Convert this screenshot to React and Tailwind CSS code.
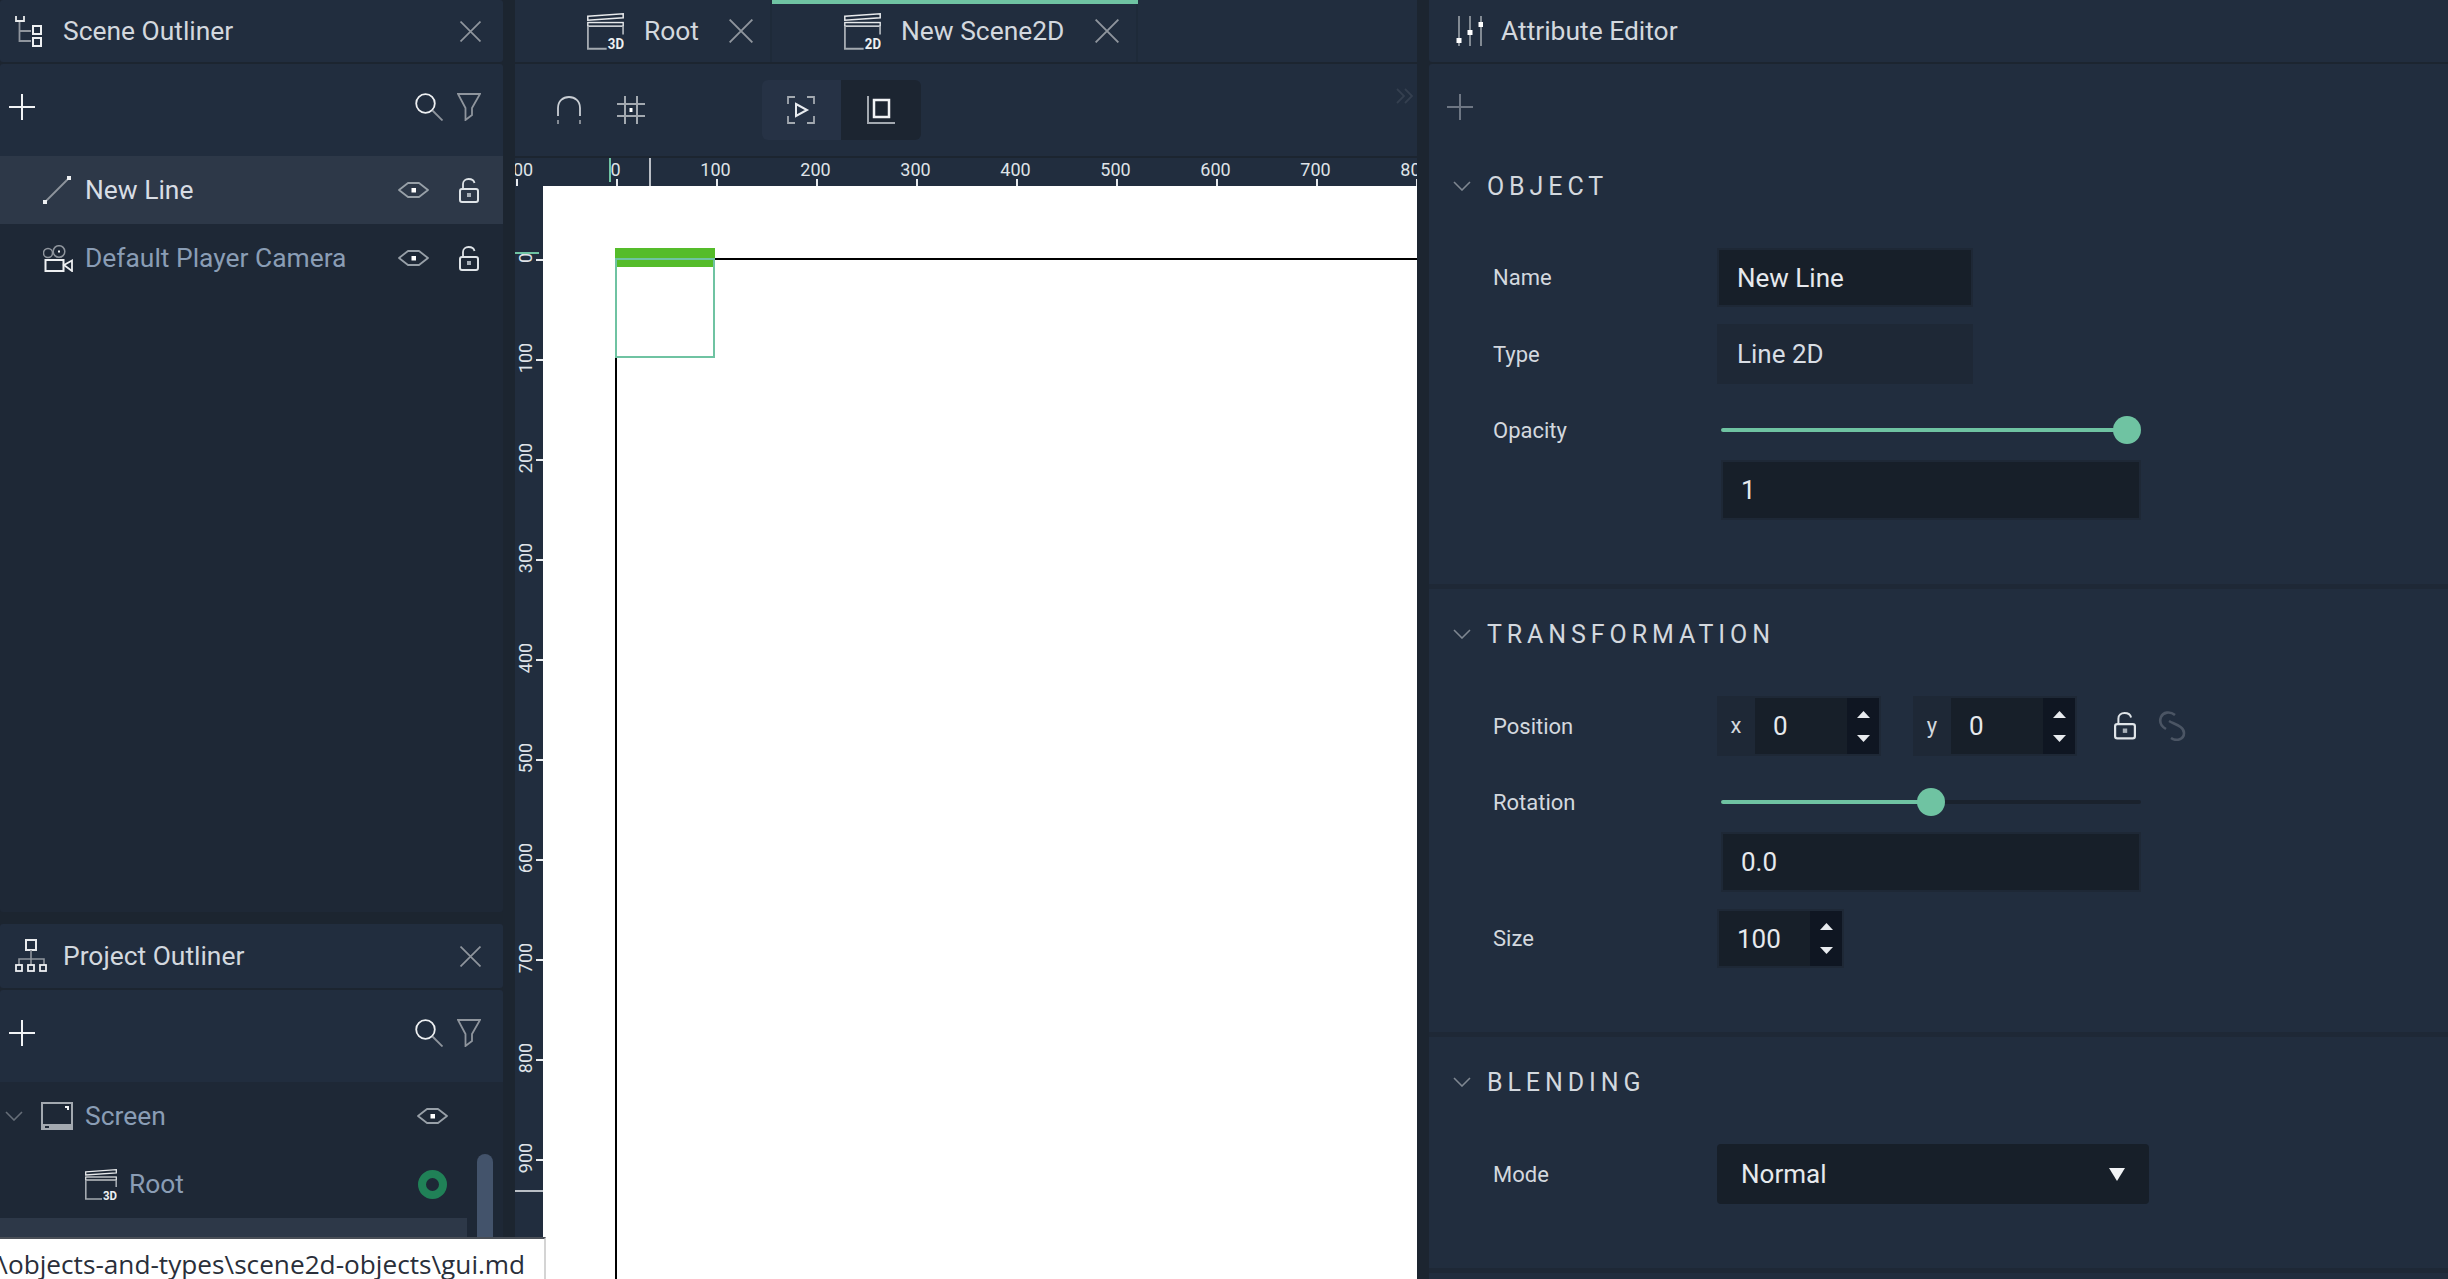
import React from "react";

const Plus = ({ size = 26, color = "#f1f3f5" }) => (
  <svg width={size} height={size} viewBox="0 0 26 26"><path d="M13 0V26M0 13H26" stroke={color} strokeWidth="2" fill="none" /></svg>
);
const Close = ({ size = 20 }) => (
  <svg width={size} height={size} viewBox="0 0 20 20"><path d="M0.5 0.5L19.5 19.5M19.5 0.5L0.5 19.5" stroke="#8f959d" strokeWidth="1.6" fill="none" /></svg>
);
const SearchI = () => (
  <svg width="28" height="28" viewBox="0 0 28 28" className="shrink-0">
    <circle cx="10.5" cy="10.5" r="9.3" stroke="#eef0f2" strokeWidth="1.8" fill="none" />
    <path d="M17.5 17.5L27.5 27.5" stroke="#8f959d" strokeWidth="1.8" />
  </svg>
);
const Funnel = () => (
  <svg width="24" height="28" viewBox="0 0 24 28" className="shrink-0">
    <path d="M1 1H23L15 15V22L8.500 27V15Z" stroke="#8f959d" strokeWidth="1.8" fill="none" />
  </svg>
);
const Eye = () => (
  <svg width="31" height="18" viewBox="0 0 31 18" className="shrink-0">
    <path d="M1 9L10 2H21L30 9L21 16H10Z" stroke="#98a0a8" strokeWidth="1.8" fill="none" strokeLinejoin="round" />
    <rect x="13.500" y="7" width="4.500" height="4.500" fill="#fff" />
  </svg>
);
const Lock = ({ w = 20 }) => (
  <svg width={w} height={w * 1.25} viewBox="0 0 20 25" className="shrink-0">
    <path d="M4 11V6C4 3 6.500 1 9.500 1C12.500 1 15 2.500 15.500 5" stroke="#dfe4e8" strokeWidth="1.8" fill="none" />
    <rect x="1" y="11" width="18" height="13" rx="2" stroke="#dfe4e8" strokeWidth="2" fill="none" />
    <rect x="8" y="15" width="4" height="4" fill="#a8b0b8" />
  </svg>
);
const SceneIcon = () => (
  <svg width="27" height="31" viewBox="0 0 27 31" className="shrink-0">
    <path d="M1 0V5H9V0" stroke="#e8eaec" strokeWidth="1.800" fill="none" />
    <path d="M4.500 6V25H16M4.500 15H16" stroke="#8f959d" strokeWidth="1.800" fill="none" />
    <rect x="18" y="10" width="8" height="8" stroke="#eef0f2" strokeWidth="2" fill="none" />
    <rect x="18" y="22" width="8" height="8" stroke="#eef0f2" strokeWidth="2" fill="none" />
  </svg>
);
const ProjectIcon = () => (
  <svg width="33" height="34" viewBox="0 0 33 34" className="shrink-0">
    <rect x="11" y="1" width="10" height="10" stroke="#e8eaec" strokeWidth="2" fill="none" />
    <path d="M16 11V20M4 26V20H29V26M16 20V26" stroke="#8f959d" strokeWidth="1.600" fill="none" />
    <rect x="1" y="26" width="6" height="6" stroke="#eef0f2" strokeWidth="1.800" fill="none" />
    <rect x="13" y="26" width="6" height="6" stroke="#eef0f2" strokeWidth="1.800" fill="none" />
    <rect x="25" y="26" width="6" height="6" stroke="#eef0f2" strokeWidth="1.800" fill="none" />
  </svg>
);
const LineIcon = () => (
  <div className="w-[30px]">
    <svg width="28" height="28" viewBox="0 0 28 28" className="shrink-0">
      <path d="M3 25L25 3" stroke="#8f959d" strokeWidth="1.800" />
      <rect x="0" y="24" width="4" height="4" fill="#eef0f2" />
      <rect x="24" y="0" width="4" height="4" fill="#eef0f2" />
    </svg>
  </div>
);
const CameraIcon = () => (
  <svg width="30" height="27" viewBox="0 0 30 27" className="shrink-0">
    <circle cx="5" cy="8" r="4.500" stroke="#8f959d" strokeWidth="1.500" fill="none" />
    <circle cx="16" cy="6.500" r="5.800" stroke="#8f959d" strokeWidth="1.500" fill="none" />
    <rect x="15" y="5.500" width="2" height="2" fill="#eef0f2" />
    <rect x="2.500" y="15" width="18" height="11" stroke="#eef0f2" strokeWidth="2" fill="none" />
    <path d="M21 20L29 15.500V26Z" stroke="#eef0f2" strokeWidth="1.800" fill="none" />
  </svg>
);
const Clapper = ({ label, w = 32, h = 31 }) => (
  <svg width={w} height={h} viewBox="0 0 32 31" className="shrink-0" preserveAspectRatio="none">
    <path d="M0.700 2.800L31.300 0.700V4L0.700 6Z" stroke="#e8eaec" strokeWidth="1.300" fill="none" />
    <rect x="0.700" y="8" width="30.600" height="3" stroke="#e8eaec" strokeWidth="1.200" fill="none" />
    <path d="M0.800 11V30H17M31.200 11V18" stroke="#a3a9b0" strokeWidth="1.600" fill="none" />
    {label && <text x="18" y="30.500" fontFamily="Roboto, sans-serif" fontWeight="700" fontSize="12" fill="#eef0f2" textLength="14" lengthAdjust="spacingAndGlyphs">{label}</text>}
  </svg>
);
const ScreenIcon = () => (
  <svg width="32" height="28" viewBox="0 0 32 28" className="shrink-0">
    <rect x="1" y="1" width="30" height="26" stroke="#a3a9b0" strokeWidth="2" fill="none" />
    <rect x="1" y="22" width="30" height="6" fill="#a3a9b0" />
    <rect x="4" y="24" width="4" height="2" fill="#1e2836" />
    <path d="M24 4H28V8H26V6H24Z" fill="#f1f3f5" />
  </svg>
);
const Chevron = ({ color = "#7f8791" }) => (
  <svg width="18" height="10" viewBox="0 0 18 10" className="shrink-0">
    <path d="M1 1L9 9L17 1" stroke={color} strokeWidth="1.600" fill="none" />
  </svg>
);
const Ring = () => (
  <svg width="29" height="29" viewBox="0 0 29 29" className="shrink-0">
    <circle cx="14.500" cy="14.500" r="10.500" stroke="#208157" strokeWidth="8" fill="none" />
  </svg>
);

const Panel = ({ icon, title, tall }) => (
  <div className={`${tall ? "h-[64px]" : "h-[62px]"} flex items-center bg-[#212d3e] rounded-[3px] shrink-0`}>
    <div className="w-[63px] pl-[15px] flex items-center">{icon}</div>
    <span className="text-[26.4px] text-[#d3d8de] leading-none flex-1">{title}</span>
    <div className="pr-[22px]"><Close size={21} /></div>
  </div>
);
const OutlinerTools = () => (
  <div className="h-[92px] mt-[2px] pb-[6px] flex items-center bg-[#212d3e] shrink-0 rounded-t-[3px]">
    <div className="ml-[9px]"><Plus /></div>
    <div className="ml-auto flex items-center gap-[14px] pr-[22px]"><SearchI /><Funnel /></div>
  </div>
);
const TreeRow = ({ active, indent, icon, label, chevron, right }) => (
  <div className={`h-[68px] flex items-center shrink-0 ${active ? "bg-[#2d3848]" : ""}`}>
    {chevron && <div className="ml-[5px] mr-[18px]"><Chevron color="#666e78" /></div>}
    <div style={{ marginLeft: indent }} className="flex items-center justify-center">{icon}</div>
    {label && <span className={`text-[26.4px] leading-none ml-[12px] flex-1 ${active ? "text-[#d8dde4]" : "text-[#8a9db5]"}`}>{label}</span>}
    {right}
  </div>
);

const Ruler = () => {
  const nums = [-100, 0, 100, 200, 300, 400, 500, 600, 700, 800];
  return (
    <div className="h-[28px] relative overflow-hidden bg-[#212d3e] shrink-0">
      {nums.map((n) => (
        <React.Fragment key={n}>
          <span className="absolute top-[3px] w-[60px] text-center text-[18px] leading-[18px] text-[#dfe3e8] whitespace-nowrap" style={{ left: n + 100.5 - 30 }}>{n}</span>
          <div className="absolute bottom-0 w-[1.5px] h-[7px] bg-[#e8ebef]" style={{ left: n + 101 }} />
        </React.Fragment>
      ))}
      <div className="absolute left-[134px] top-0 bottom-0 w-[1.5px] bg-[#b9bec5]" />
      <div className="absolute left-[94px] top-0 h-[24px] w-[1.5px] bg-[#6fc3a2]" />
    </div>
  );
};
const SideRuler = () => {
  const nums = [0, 100, 200, 300, 400, 500, 600, 700, 800, 900];
  return (
    <div className="w-[28px] relative overflow-hidden bg-[#212d3e] shrink-0">
      {nums.map((n) => (
        <React.Fragment key={n}>
          <span className="absolute left-[-19px] w-[60px] text-center text-[18px] leading-[18px] text-[#dfe3e8] -rotate-90" style={{ top: n + 73 - 9 - 1 }}>{n}</span>
          <div className="absolute right-0 w-[7px] h-[1.5px] bg-[#e8ebef]" style={{ top: n + 73 }} />
        </React.Fragment>
      ))}
      <div className="absolute left-0 top-[1004px] w-[28px] h-[1.5px] bg-[#b9bec5]" />
      <div className="absolute left-0 top-[66px] w-[24px] h-[1.5px] bg-[#6fc3a2]" />
    </div>
  );
};
const Tab = ({ w, label, badge, active }) => (
  <div className="relative h-full flex items-center border-r-2 border-[#1e2a39] pl-[72px]" style={{ width: w }}>
    {active && <div className="absolute left-0 right-[-2px] top-0 h-[4px] bg-[#6fc3a2]" />}
    <Clapper label={badge} w={37} h={37} />
    <span className="text-[26.4px] leading-none text-[#d3d8de] ml-[20px]">{label}</span>
    <div className="absolute right-[17px] top-[19px]"><Close size={24} /></div>
  </div>
);
const Row = ({ label, children, className = "" }) => (
  <div className={`flex items-center pl-[64px] ${className}`}>
    <span className="w-[224px] pt-[1px] text-[22px] leading-none text-[#d3d8de] shrink-0">{label}</span>
    {children}
  </div>
);
const SectionTitle = ({ children, h }) => (
  <div className="flex items-center pl-[24px] shrink-0" style={{ height: h }}>
    <Chevron />
    <span className="ml-[16px] text-[25px] leading-none tracking-[4.900px] text-[#d3d8de]">{children}</span>
  </div>
);
const Slider = ({ pct }) => (
  <div className="relative w-[420px] h-[4px] ml-[4px] -mt-[1px] rounded-full bg-[#1a222d]">
    <div className="h-full bg-[#6fc3a2] rounded-full" style={{ width: (392 * pct) / 100 + 14 }} />
    <div className="absolute top-[-12px] w-[28px] h-[28px] rounded-full bg-[#6fc3a2]" style={{ left: (392 * pct) / 100 }} />
  </div>
);
const WideInput = ({ value }) => (
  <div className="w-[420px] h-[60px] ml-[292px] flex items-center pl-[18px] bg-[#171f29] border-2 border-[#1e2836] text-[26px] leading-none text-[#e6e9ed]">{value}</div>
);
const Stepper = () => (
  <div className="w-[32px] h-full bg-[#0f1622] flex flex-col items-center justify-center gap-[17px] shrink-0">
    <svg width="13" height="7" viewBox="0 0 13 7"><path d="M6.500 0L13 7H0Z" fill="#e8ebef" /></svg>
    <svg width="13" height="7" viewBox="0 0 13 7"><path d="M0 0H13L6.500 7Z" fill="#e8ebef" /></svg>
  </div>
);
const AxisField = ({ axis }) => (
  <div className="w-[164px] h-[60px] flex bg-[#1e2836] border-2 border-[#1e2836]">
    <span className="w-[36px] pr-[2px] flex items-center justify-center text-[22px] leading-none text-[#d3d8de]">{axis}</span>
    <span className="w-[92px] bg-[#171f29] flex items-center pl-[18px] text-[26px] leading-none text-[#e6e9ed]">0</span>
    <Stepper />
  </div>
);
const Divider = () => <div className="h-[5px] bg-[#1e2836] shrink-0" />;

export default function App() {
  return (
    <div className="relative w-[2448px] h-[1279px] overflow-hidden flex bg-[#1c2530] font-['Roboto',sans-serif]">
      {/* left */}
      <div className="w-[503px] h-full flex flex-col shrink-0">
        <Panel icon={<SceneIcon />} title="Scene Outliner" />
        <OutlinerTools />
        <div className="h-[756px] bg-[#1e2836] shrink-0 rounded-b-[3px]">
          <TreeRow active indent={43} icon={<LineIcon />} label="New Line" right={<div className="flex items-center gap-[30px] pr-[24px]"><Eye /><Lock /></div>} />
          <TreeRow indent={43} icon={<CameraIcon />} label="Default Player Camera" right={<div className="flex items-center gap-[30px] pr-[24px]"><Eye /><Lock /></div>} />
        </div>
        <div className="h-[12px] shrink-0" />
        <Panel tall icon={<ProjectIcon />} title="Project Outliner" />
        <OutlinerTools />
        <div className="flex-1 flex bg-[#1e2836] overflow-hidden">
          <div className="w-[467px] shrink-0">
            <TreeRow chevron indent={0} icon={<ScreenIcon />} label="Screen" right={<div className="pr-[19px]"><Eye /></div>} />
            <TreeRow indent={85} icon={<Clapper label="3D" />} label="Root" right={<div className="pr-[20px]"><Ring /></div>} />
            <TreeRow active indent={85} icon={<Clapper />} />
          </div>
          <div className="ml-[10px] mt-[72px] w-[16px] h-[200px] rounded-full bg-[#43536b]" />
        </div>
      </div>
      <div className="w-[12px] shrink-0" />
      {/* center */}
      <div className="w-[902px] h-full flex flex-col shrink-0">
        <div className="h-[62px] flex bg-[#212d3e] shrink-0">
          <Tab w={257} label="Root" badge="3D" />
          <Tab w={366} label="New Scene2D" badge="2D" active />
        </div>
        <div className="h-[92px] mt-[2px] relative flex items-center bg-[#212d3e] shrink-0">
          <div className="ml-[42px]">
            <svg width="24" height="28" viewBox="0 0 24 28"><path d="M1 20V12C1 5 6 1 12 1C18 1 23 5 23 12V20" stroke="#c9ced4" strokeWidth="1.800" fill="none" /><path d="M1 24V28M23 24V28" stroke="#8f959d" strokeWidth="1.800" /></svg>
          </div>
          <div className="ml-[36px]">
            <svg width="28" height="28" viewBox="0 0 28 28"><path d="M8 0V28M20 0V28M0 8H28M0 20H28" stroke="#a3a9b0" strokeWidth="2" fill="none" /><rect x="12.500" y="12" width="3" height="4" fill="#fff" /></svg>
          </div>
          <div className="ml-[117px] flex h-[60px] rounded-[6px] overflow-hidden">
            <div className="w-[79px] bg-[#263245] flex items-center justify-center pr-[2px]">
              <svg width="28" height="28" viewBox="0 0 28 28"><path d="M8 1H1V8M20 1H27V8M1 20V27H8M27 20V27H20" stroke="#a3a9b0" strokeWidth="1.800" fill="none" /><path d="M9 8L20 14L9 20Z" stroke="#e8ebef" strokeWidth="2" fill="none" /></svg>
            </div>
            <div className="w-[80px] bg-[#1c2531] flex items-center justify-center">
              <svg width="28" height="28" viewBox="0 0 28 28"><path d="M1 0V27H28" stroke="#a3a9b0" strokeWidth="2" fill="none" /><rect x="7" y="4" width="15" height="17" stroke="#f1f3f5" strokeWidth="2.500" fill="none" /></svg>
            </div>
          </div>
          <div className="absolute right-[2px] top-[24px]">
            <svg width="20" height="16" viewBox="0 0 20 16"><path d="M2 1L9 8L2 15M10 1L17 8L10 15" stroke="#343f4f" strokeWidth="1.800" fill="none" /></svg>
          </div>
        </div>
        <div className="h-[2px] shrink-0" />
        <Ruler />
        <div className="flex-1 flex min-h-0">
          <SideRuler />
          <div className="flex-1 relative bg-white overflow-hidden">
            <div className="absolute left-[172px] right-0 top-[72px] h-[2px] bg-black" />
            <div className="absolute left-[72px] top-[172px] bottom-0 w-[2px] bg-black" />
            <div className="absolute left-[72px] top-[62px] w-[100px] h-[19px] bg-[#55bc2a]" />
            <div className="absolute left-[72px] top-[72px] w-[100px] h-[100px] border-2 border-[#6fc3a2]" />
          </div>
        </div>
      </div>
      <div className="w-[12px] shrink-0" />
      {/* right */}
      <div className="flex-1 h-full flex flex-col min-w-0">
        <div className="h-[62px] flex items-center bg-[#212d3e] rounded-bl-[3px] shrink-0">
          <div className="pl-[27px] w-[62px]">
            <svg width="27" height="30" viewBox="0 0 27 30"><path d="M3 0V30M14 0V30M25 0V30" stroke="#a3a9b0" strokeWidth="1.500" /><rect x="0.500" y="22" width="5" height="5" fill="#fff" /><rect x="11.500" y="14" width="5" height="5" fill="#fff" /><rect x="22.500" y="6" width="5" height="5" fill="#fff" /></svg>
          </div>
          <span className="text-[26.4px] leading-none text-[#d3d8de] ml-[10px]">Attribute Editor</span>
        </div>
        <div className="flex-1 mt-[2px] bg-[#212d3e] flex flex-col rounded-tl-[3px]">
          <div className="h-[86px] flex items-center pl-[18px] shrink-0"><Plus size={26} color="#6d7683" /></div>
          <div className="h-[434px] shrink-0">
            <SectionTitle h={72}>OBJECT</SectionTitle>
            <Row label="Name" className="mt-[26px] h-[59px]"><div className="w-[256px] h-full flex items-center pl-[18px] bg-[#171f29] border-2 border-[#1e2836] text-[26px] leading-none text-[#e6e9ed]">New Line</div></Row>
            <Row label="Type" className="mt-[17px] h-[60px]"><div className="w-[256px] h-full flex items-center pl-[20px] bg-[#1e2836] text-[26px] leading-none text-[#d8dde4]">Line 2D</div></Row>
            <Row label="Opacity" className="mt-[17px] h-[59px]"><Slider pct={100} /></Row>
            <WideInput value="1" />
          </div>
          <Divider />
          <div className="h-[443px] shrink-0">
            <SectionTitle h={90}>TRANSFORMATION</SectionTitle>
            <Row label="Position" className="mt-[17px] h-[60px]">
              <AxisField axis="x" />
              <div className="ml-[32px]"><AxisField axis="y" /></div>
              <div className="ml-[37px]"><Lock w={22} /></div>
              <div className="ml-[22px]">
                <svg width="28" height="30" viewBox="0 0 28 30"><path d="M17 4C12 0 5 1 3 6C1 11 3 15 8 18" stroke="#4b5564" strokeWidth="2.600" fill="none" /><path d="M11 10C16 13 26 15 26 22C26 28 19 31 13 27" stroke="#4b5564" strokeWidth="2.600" fill="none" /></svg>
              </div>
            </Row>
            <Row label="Rotation" className="mt-[16px] h-[60px]"><Slider pct={50} /></Row>
            <WideInput value="0.0" />
            <Row label="Size" className="mt-[17px] h-[59px]">
              <div className="w-[127px] h-full flex bg-[#171f29] border-2 border-[#1e2836]">
                <span className="w-[92px] flex items-center pl-[18px] text-[26px] leading-none text-[#e6e9ed]">100</span>
                <Stepper />
              </div>
            </Row>
          </div>
          <Divider />
          <div className="h-[231px] shrink-0">
            <SectionTitle h={90}>BLENDING</SectionTitle>
            <Row label="Mode" className="mt-[17px] h-[60px]">
              <div className="w-[432px] h-full flex items-center pl-[24px] pr-[24px] rounded-[4px] bg-[#171f29] text-[26px] leading-none text-[#e6e9ed]">
                <span className="flex-1">Normal</span>
                <svg width="16" height="13" viewBox="0 0 16 13"><path d="M0 0H16L8 13Z" fill="#f1f3f5" /></svg>
              </div>
            </Row>
          </div>
          <Divider />
        </div>
      </div>
      {/* status tooltip */}
      <div className="absolute left-0 bottom-0 w-[546px] h-[42px] bg-white border-t-2 border-r-2 border-t-[#4a4f57] border-r-[#d4d4d4] overflow-hidden flex items-center pt-[11px]">
        <span className="-ml-[11px] text-[26.2px] leading-none text-[#2a2f3a] whitespace-nowrap font-['Open_Sans',sans-serif]">t\objects-and-types\scene2d-objects\gui.md</span>
      </div>
    </div>
  );
}
